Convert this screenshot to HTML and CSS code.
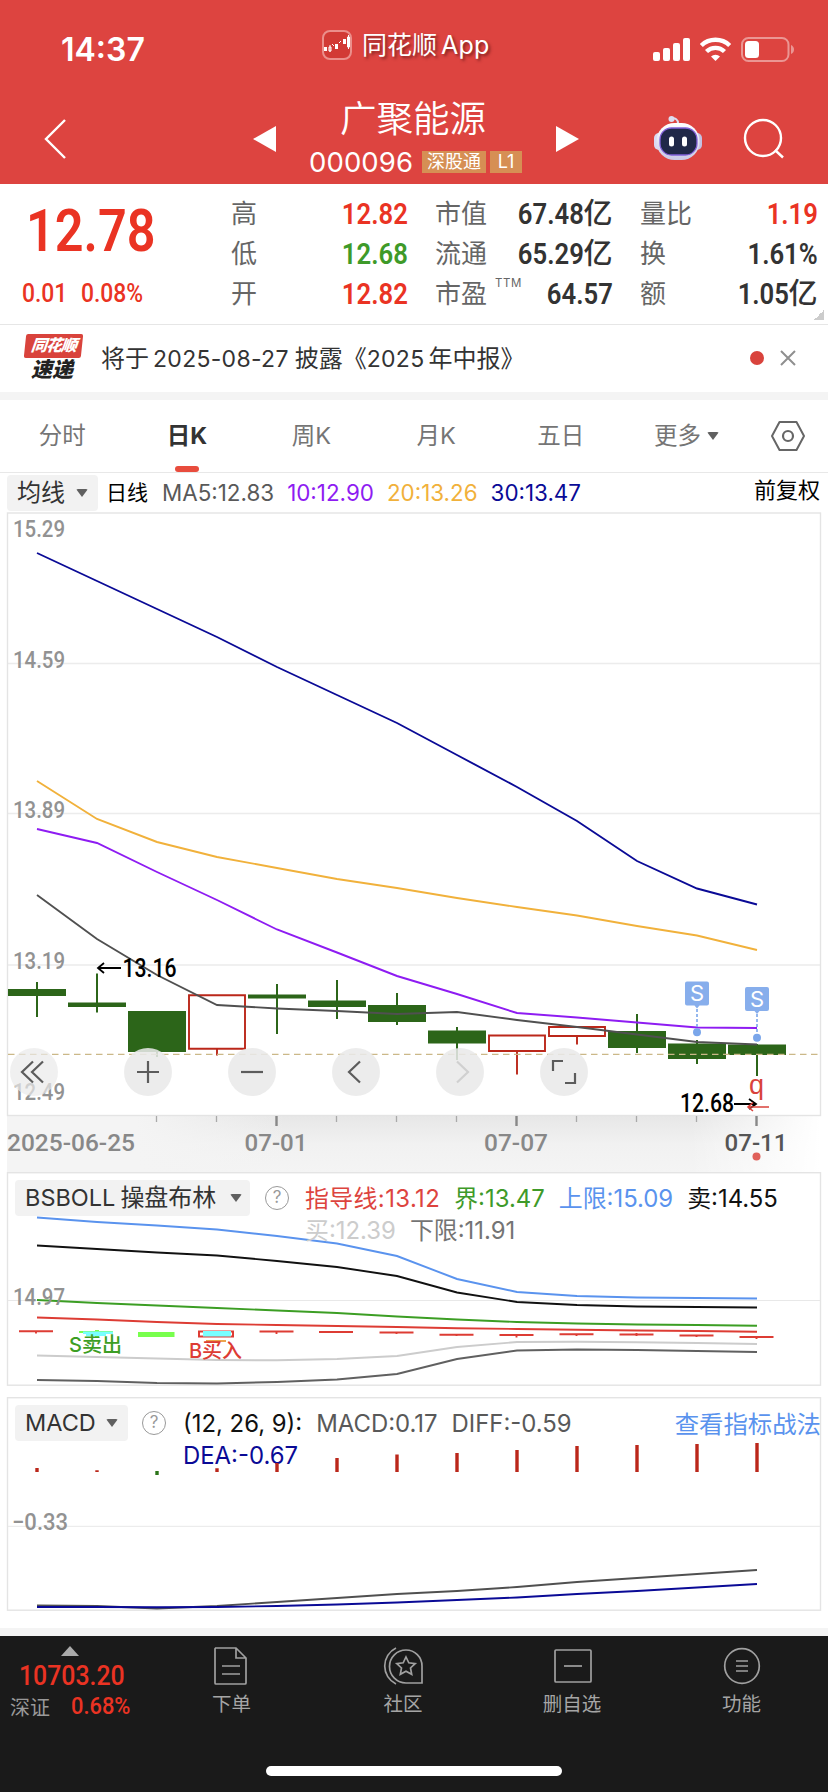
FILE: index.html
```html
<!DOCTYPE html>
<html lang="zh-CN">
<head>
<meta charset="utf-8">
<title>广聚能源 000096</title>
<link rel="stylesheet" href="styles.css">
</head>
<body>
<header class="header">
  <div class="status">
    <span class="time">14:37</span>
    <div class="app">
      <svg width="30" height="30" viewBox="0 0 30 30"><rect x="1" y="1" width="28" height="28" rx="7" fill="#d23a35" stroke="#eb8f8b" stroke-width="2"/><path d="M2 17h3v4H2zM10 13l3 3M13 14h3v5h-3zM16 12l2-2M21 9h3v5h-3z" fill="#fff"/><path d="M7 17h2v4H7zM8 15v7M10 14l2 2M17 13l2-2M25.500 7h2v10h-2zM26.500 5v14" fill="none" stroke="#fff" stroke-width="1"/></svg>
      <span class="app-name">同花顺<span class="app-latin">App</span></span>
    </div>
    <svg class="radios" width="143" height="28" viewBox="652 35 143 28">
      <g fill="#fff"><rect x="653" y="52" width="7" height="9" rx="2"/><rect x="663" y="48" width="7" height="13" rx="2"/><rect x="673" y="43" width="7" height="18" rx="2"/><rect x="683" y="38" width="7" height="23" rx="2"/><path d="M715.500 61l-4.500-4.500a6.500 6.500 0 0 1 9 0z"/></g>
      <path d="M701.300 45.500a20.500 20.500 0 0 1 28.400 0M706.500 51.500a13 13 0 0 1 18 0" fill="none" stroke="#fff" stroke-width="4.400"/>
      <rect x="742" y="38" width="46.500" height="23" rx="6.500" fill="none" stroke="#eb9693" stroke-width="2"/><path d="M791 45v9q3-1.500 3-4.500t-3-4.500z" fill="#eb9693"/><rect x="745" y="41" width="14" height="17" rx="3.500" fill="#fff"/>
    </svg>
  </div>
  <div class="nav">
    <svg class="back" width="24" height="42" viewBox="0 0 24 42"><path d="M22 2L3 21l19 19" fill="none" stroke="#fff" stroke-width="2.400"/></svg>
    <svg class="prev" width="23" height="26" viewBox="0 0 23 26"><path d="M23 0v26L0 13z" fill="#fff"/></svg>
    <div class="title">
      <h1>广聚能源</h1>
      <div class="code"><span class="digits">000096</span><span class="tag">深股通</span><span class="tag tag-small">L1</span></div>
    </div>
    <svg class="next" width="23" height="26" viewBox="0 0 23 26"><path d="M0 0v26l23-13z" fill="#fff"/></svg>
    <svg class="robot" width="50" height="46" viewBox="653 115 50 46">
      <defs><linearGradient id="shell" x2="0" y2="1"><stop offset="0" stop-color="#fff"/><stop offset="1" stop-color="#c9c9e6"/></linearGradient></defs>
      <path d="M671 118.500q7-1 7 5" fill="none" stroke="#dcdcf0" stroke-width="2"/><circle cx="671.500" cy="119" r="3" fill="#dcdcf0"/>
      <rect x="654" y="133" width="10" height="17" rx="5" fill="#dadaf2"/><rect x="692" y="133" width="10" height="17" rx="5" fill="#c4c2e2"/>
      <rect x="656.500" y="123" width="43" height="37" rx="18" fill="url(#shell)"/>
      <rect x="660" y="128" width="37" height="27" rx="11.500" fill="#202848" stroke="#8060d8" stroke-width="1.300"/>
      <rect x="669" y="136.500" width="5" height="10" rx="2.500" fill="#fff"/><rect x="682" y="136.500" width="5" height="10" rx="2.500" fill="#fff"/>
    </svg>
    <svg class="search" width="42" height="42" viewBox="743 118 42 42"><circle cx="763" cy="138" r="18" fill="none" stroke="#fff" stroke-width="2.400"/><path d="M775 150l8 7.500" stroke="#fff" stroke-width="2.400"/></svg>
  </div>
</header>

<section class="quote">
  <div class="price-box">
    <div class="price din">12.78</div>
    <div class="change"><span class="din">0.01</span><span class="din">0.08%</span></div>
  </div>
  <dl class="stats stats-a">
    <dt>高</dt><dd class="up"><span class="din">12.82</span></dd>
    <dt>低</dt><dd class="down"><span class="din">12.68</span></dd>
    <dt>开</dt><dd class="up"><span class="din">12.82</span></dd>
  </dl>
  <dl class="stats stats-b">
    <dt>市值</dt><dd><span class="din">67.48</span>亿</dd>
    <dt>流通</dt><dd><span class="din">65.29</span>亿</dd>
    <dt>市盈<sup>TTM</sup></dt><dd><span class="din">64.57</span></dd>
  </dl>
  <dl class="stats stats-c">
    <dt>量比</dt><dd class="up"><span class="din">1.19</span></dd>
    <dt>换</dt><dd><span class="din">1.61%</span></dd>
    <dt>额</dt><dd><span class="din">1.05</span>亿</dd>
  </dl>
  <i class="corner"></i>
</section>

<section class="news">
  <div class="logo"><span class="logo-top">同花顺</span><span class="logo-bottom">速递</span></div>
  <p>将于<span class="num first">2025-08-27</span>披露《<span class="num">2025</span>年中报》</p>
  <i class="dot"></i>
  <svg class="close" width="16" height="16" viewBox="0 0 16 16"><path d="M1 1l14 14M15 1L1 15" stroke="#8f8f8f" stroke-width="2"/></svg>
</section>

<nav class="tabs">
  <span>分时</span><span class="active">日<b>K</b></span><span>周<b>K</b></span><span>月<b>K</b></span><span>五日</span><span class="more">更多<i class="caret"></i></span>
  <svg width="36" height="32" viewBox="0 0 36 32"><path d="M9.500 2h17L34 16l-7.500 14h-17L2 16z" fill="none" stroke="#666" stroke-width="2" stroke-linejoin="round"/><circle cx="18" cy="16" r="5" fill="none" stroke="#666" stroke-width="2.200"/></svg>
</nav>

<div class="ma-row">
  <span class="pill">均线<i class="caret"></i></span><span class="kind">日线</span>
  <span class="ma c-dark">MA5:12.83</span><span class="ma c-purple">10:12.90</span><span class="ma c-orange">20:13.26</span><span class="ma c-navy">30:13.47</span>
  <span class="adjust">前复权</span>
</div>

<section class="kline">
  <svg class="plot" width="828" height="660" viewBox="0 512 828 660">
    <defs><linearGradient id="axis" x1="0" x2="0" y1="0" y2="1"><stop offset="0" stop-color="#e7e7e7"/><stop offset=".5" stop-color="#f1f1f1"/><stop offset="1" stop-color="#f4f4f4"/></linearGradient>
    <linearGradient id="fade-l"><stop offset="0" stop-color="#f4f4f4"/><stop offset="1" stop-color="#f4f4f4" stop-opacity="0"/></linearGradient>
    <linearGradient id="fade-r"><stop offset="0" stop-color="#fff" stop-opacity="0"/><stop offset="1" stop-color="#fff"/></linearGradient></defs>
    <rect x="7" y="1116" width="815" height="56" fill="url(#axis)"/><rect x="7" y="1116" width="130" height="56" fill="#f4f4f4"/><rect x="136" y="1116" width="150" height="56" fill="url(#fade-l)"/><rect x="690" y="1116" width="130" height="56" fill="url(#fade-r)"/><rect x="819" y="1116" width="9" height="56" fill="#fff"/>
    <path d="M8 663.500H820M8 813.500H820M8 965H820" stroke="#ececec" stroke-width="1.300"/>
    <rect x="7.500" y="513" width="813" height="602.500" fill="none" stroke="#e4e4e4" stroke-width="1.400"/>
    <g class="din-label">
      <text x="13" y="537" textLength="52" lengthAdjust="spacingAndGlyphs">15.29</text><text x="13" y="667.500" textLength="52" lengthAdjust="spacingAndGlyphs">14.59</text><text x="13" y="818" textLength="52" lengthAdjust="spacingAndGlyphs">13.89</text><text x="13" y="969" textLength="52" lengthAdjust="spacingAndGlyphs">13.19</text><text x="13" y="1099.500" textLength="52" lengthAdjust="spacingAndGlyphs">12.49</text>
    </g>
    <g fill="#2c6519">
      <path d="M8 989h58v7H8zM36 982h2v35h-2zM68 1002.500h58v4.500H68zM96 973.500h2v39h-2zM128 1011h58v41h-58zM156 1050h2v7h-2zM248 994.500h58v4h-58zM276 984h2v50h-2zM308 1000.500h58v6.500h-58zM336 980h2v39h-2zM368 1005h58v17h-58zM396 993h2v32h-2zM428 1030.500h58v13h-58zM456 1027h2v33h-2zM608 1031h58v17h-58zM636 1014h2v39h-2zM668 1043.500h58v15.500h-58zM696 1040h2v24h-2zM728 1044.500h58v10.500h-58zM756 1044h2v32h-2z"/>
    </g>
    <path d="M189 995.200h56v53.600h-56zM217 1049v6.500M489 1035.500h56v15.500h-56zM517 1051v23.500M549 1027h56v9h-56zM577 1036v8.500" fill="none" stroke="#bb271a" stroke-width="1.900"/>
    <path d="M8 1054.300H820" stroke="#cbb888" stroke-width="1.200" stroke-dasharray="6.500 4.500"/>
    <g fill="none" stroke-width="1.900">
      <polyline stroke="#0a0a96" points="37,553 97,581 157,609 217,637 277,667 337,695 397,723 457,755 517,787 577,821 637,861 697,888.500 757,904.500"/>
      <polyline stroke="#f1b13b" points="37,781 97,819 157,842 217,857 277,868 337,879 397,888 457,898 517,907 577,915.500 637,926 697,935.500 757,950"/>
      <polyline stroke="#8e1cf2" points="37,829 97,843 157,872 217,900 277,929.500 337,952.500 397,976 457,994 517,1013 577,1017.500 637,1022.500 697,1027.500 757,1028"/>
      <polyline stroke="#505050" points="37,895 97,939 157,975 217,1005 277,1008.500 337,1011 397,1014 457,1012 517,1020 577,1027 637,1034.500 697,1042 757,1044.500"/>
    </g>
    <g class="mark"><path d="M121 968H99M104 963l-6 5 6 5M734 1104h21M749 1099l7 5-7 5" fill="none" stroke="#000" stroke-width="1.800"/><text x="122.500" y="976.500" textLength="54" lengthAdjust="spacingAndGlyphs">13.16</text><text x="680" y="1112" textLength="54" lengthAdjust="spacingAndGlyphs">12.68</text></g>
    <text x="749" y="1093.500" class="q">q</text><path d="M769 1107h-20M753 1102.500l-5 4.500 5 4" fill="none" stroke="#d9433c" stroke-width="1.600"/>
    <g fill="#87aeec"><path d="M687 981.500h20a2 2 0 0 1 2 2v20a2 2 0 0 1-2 2h-7.500l-2.500 3-2.500-3H687a2 2 0 0 1-2-2v-20a2 2 0 0 1 2-2zM747 987h20a2 2 0 0 1 2 2v20a2 2 0 0 1-2 2h-7.500l-2.500 3-2.500-3H747a2 2 0 0 1-2-2v-20a2 2 0 0 1 2-2z"/></g>
    <path d="M697 1009v20M757 1014v21" stroke="#7aa6ea" stroke-width="1.600" stroke-dasharray="3 2"/><circle cx="697" cy="1032.300" r="4" fill="#7aa6ea"/><circle cx="757" cy="1037.800" r="4" fill="#7aa6ea"/>
    <g class="badge"><text x="697" y="1001">S</text><text x="757" y="1006.500">S</text></g>
    <path d="M156.500 1116v6M216.500 1116v6M336.500 1116v6M396.500 1116v6M576.500 1116v6M636.500 1116v6M696.500 1116v6M456.500 1116v6" stroke="#aaa" stroke-width="1.300"/><path d="M276.500 1116v10M516.500 1116v10M756.500 1116v10" stroke="#888" stroke-width="2.400"/>
    <g class="date"><text x="7" y="1150.500" textLength="128" lengthAdjust="spacingAndGlyphs">2025-06-25</text><text x="244.500" y="1150.500" textLength="63" lengthAdjust="spacingAndGlyphs">07-01</text><text x="484" y="1150.500" textLength="64" lengthAdjust="spacingAndGlyphs">07-07</text><text x="724.500" y="1150.500" textLength="63" lengthAdjust="spacingAndGlyphs" class="today">07-11</text></g>
    <circle cx="756.500" cy="1156.500" r="4" fill="#e0605a"/>
  </svg>
  <div class="tools">
    <button><svg viewBox="0 0 48 48"><path d="M23 13.500L12 24l11 10.500M33 13.500L22 24l11 10.500"/></svg></button>
    <button><svg viewBox="0 0 48 48"><path d="M24 13v22M13 24h22"/></svg></button>
    <button><svg viewBox="0 0 48 48"><path d="M13 24h22"/></svg></button>
    <button><svg viewBox="0 0 48 48"><path d="M28 13.500L17 24l11 10.500"/></svg></button>
    <button class="off"><svg viewBox="0 0 48 48"><path d="M21 13.500L32 24 21 34.500"/></svg></button>
    <button><svg viewBox="0 0 48 48"><path d="M23 13H13v10M25 35h10V25"/></svg></button>
  </div>
</section>

<section class="panel boll">
  <svg class="plot" width="828" height="214" viewBox="0 1172 828 214">
    <rect x="7.500" y="1172.700" width="813" height="212.500" fill="#fff" stroke="#e4e4e4" stroke-width="1.400"/><path d="M8 1300.500H820" stroke="#e8e8e8"/>
    <g fill="none" stroke-width="1.900">
      <polyline stroke="#5a93ee" points="37,1217.500 97,1222 157,1225.500 217,1229.500 277,1236 337,1243.500 397,1256 457,1279 517,1292 577,1296 637,1297.500 697,1298 757,1298.500"/>
      <polyline stroke="#111" points="37,1245.500 97,1249 157,1252.500 217,1255.500 277,1261 337,1267 397,1276 457,1292.500 517,1302 577,1305 637,1306.500 697,1307 757,1307.500"/>
      <polyline stroke="#3c9e24" points="37,1300 97,1303 157,1305.500 217,1308 277,1310.500 337,1313 397,1316.500 457,1319.500 517,1322 577,1323.500 637,1324.500 697,1325 757,1325.700"/>
      <polyline stroke="#dd3c34" points="37,1317.500 97,1319.500 157,1322 217,1324 277,1325 337,1326 397,1327 457,1328.200 517,1329 577,1329.800 637,1330.500 697,1331 757,1331.700"/>
      <polyline stroke="#ccc" points="37,1355.500 97,1357 157,1358.500 217,1360 277,1360.300 337,1359 397,1356 457,1347 517,1342 577,1341.800 637,1342.300 697,1343 757,1344"/>
      <polyline stroke="#606060" points="37,1380 97,1381 157,1383 217,1383.500 277,1382 337,1379.500 397,1374 457,1359 517,1350.500 577,1349.500 637,1350 697,1351 757,1352"/>
      <path stroke="#dd3c34" d="M19 1331.300h34M36 1331v2.500M259.500 1331.500h34M276.500 1331v3M319 1332h34M336 1331v2M379.500 1332.500h34M396.500 1332v2M439.500 1334.700h34M456.500 1334v2M499.500 1335h34M516.500 1335v2.500M559.500 1334.200h34M576.500 1334v2M619.500 1334.500h34M636.500 1333v3M679.500 1335.500h34M696.500 1335v2M739.500 1337h34M756.500 1337v2"/>
    </g>
    <path fill="#78ff4d" d="M79 1331h34v2H79zM95 1330h4v7h-4zM138 1332h36.500v5H138z"/><path fill="#79ffff" d="M83 1331.500h30v2.500H83zM86 1334h20v2H86z"/>
    <rect x="199" y="1331.500" width="34" height="5" fill="#fff" stroke="#dd3c34" stroke-width="2"/><path fill="#79ffff" d="M203 1331h28v5.500h-28z"/><path fill="#eca44e" d="M206 1340h20v2h-20z"/>
    <text class="din-label" x="13" y="1304.500" textLength="52" lengthAdjust="spacingAndGlyphs">14.97</text>
    <text class="signal" x="69" y="1351.500" fill="#3c9e24" textLength="53">S卖出</text><text class="signal" x="189" y="1357.500" fill="#dd3c34" textLength="53">B买入</text>
  </svg>
  <span class="pill"><span class="lat">BSBOLL</span>操盘布林<i class="caret"></i></span><span class="help">?</span>
  <div class="legend">
    <span class="c-red spread">指导线:13.12</span><span class="c-green">界:13.47</span><span class="c-blue">上限:15.09</span><span class="c-black">卖:14.55</span><br>
    <span class="c-light">买:12.39</span><span class="c-gray">下限:11.91</span>
  </div>
</section>

<section class="panel macd">
  <svg class="plot" width="828" height="214" viewBox="0 1397 828 214">
    <rect x="7.500" y="1397.700" width="813" height="212.500" fill="#fff" stroke="#e4e4e4" stroke-width="1.400"/><path d="M8 1526.300H820" stroke="#e8e8e8"/>
    <g fill="none" stroke-width="1.900"><polyline stroke="#505050" points="37,1605.500 97,1606 157,1608.500 217,1606 277,1602 337,1598 397,1594 457,1591 517,1587 577,1582 637,1578 697,1574 757,1570"/><polyline stroke="#0a0a96" points="37,1607 97,1607 157,1607.300 217,1607 277,1606 337,1604.500 397,1602.500 457,1600 517,1597.500 577,1594 637,1591 697,1587.500 757,1584"/></g>
    <text class="din-label" x="12" y="1529.500" textLength="56" lengthAdjust="spacingAndGlyphs">−0.33</text>
  </svg>
  <span class="pill"><span class="lat">MACD</span><i class="caret"></i></span><span class="help">?</span>
  <div class="legend">
    <span class="c-black">(12, 26, 9):</span><span class="c-dark">MACD:0.17</span><span class="c-dark">DIFF:-0.59</span><br>
    <span class="c-navy">DEA:-0.67</span>
  </div>
  <span class="link">查看指标战法</span>
  <svg class="plot" width="828" height="214" viewBox="0 1397 828 214"><path stroke="#bb271a" stroke-width="3.400" d="M37 1468v4M97 1470.300v1.700M217 1468.300v3.700M277 1463v9M337 1458v14M397 1454.500v17.500M457 1453v19M517 1450v22M577 1446v26M637 1445v27M697 1444v28M757 1443v29"/><path stroke="#2c7519" stroke-width="3.400" d="M157 1471v4"/></svg>
</section>

<footer class="footer">
  <div class="index">
    <i class="up-arrow"></i>
    <span class="index-value din">10703.20</span>
    <div class="index-row"><span>深证</span><span class="din">0.68%</span></div>
  </div>
  <div class="item"><svg viewBox="0 0 42 40"><path d="M4 2h21l10 10v25a1 1 0 0 1-1 1H5a1 1 0 0 1-1-1V3a1 1 0 0 1 1-1M25 2v10h10M11 20h18M11 28h18"/></svg>下单</div>
  <div class="item"><svg viewBox="0 0 42 40"><path d="M14 2A20 20 0 0 0 14 38"/><path d="M24 4a16 16 0 0 0 0 33h16V20a16 16 0 0 0-16-16z"/><path d="M24 11l2.800 5.800 6.400.8-4.700 4.400 1.200 6.300-5.700-3.100-5.700 3.100 1.200-6.300-4.700-4.400 6.400-.8z"/></svg>社区</div>
  <div class="item"><svg viewBox="0 0 42 40"><rect x="4" y="4" width="36" height="32" rx="1"/><path d="M13 20h18"/></svg>删自选</div>
  <div class="item"><svg viewBox="0 0 42 40"><circle cx="21" cy="20" r="17.300"/><path d="M15 15h12M15 20h12M15 25h12"/></svg>功能</div>
  <i class="home"></i>
</footer>
</body>
</html>
```
FILE: styles.css
```css
* { box-sizing: border-box; margin: 0; padding: 0; }
body { width: 828px; height: 1792px; overflow: hidden; background: #fff; color: #333; font-family: Inter, "Noto Sans CJK SC", sans-serif; font-size: 22px; }
i { display: block; font-style: normal; }
svg { display: block; flex: none; }
.din { display: inline-block; font-family: Roboto, sans-serif; transform: scaleX(.87); transform-origin: right; }

.header { height: 184px; background: #dd4440; color: #fff; }
.status { display: flex; height: 92px; padding-top: 30px; }
.time { width: 260px; padding-left: 61px; font-size: 32px; font-weight: 600; line-height: 40px; }
.app { display: flex; width: 269px; margin-left: 62px; gap: 10px; line-height: 31px; }
.app-name { font-size: 25px; text-shadow: 2px 2px 3px rgba(90, 20, 20, .7); white-space: nowrap; }
.app-latin { margin-left: 4px; letter-spacing: .2px; }
.radios { margin: 5px 0 0 61px; }
.nav { display: flex; height: 92px; align-items: flex-start; }
.back { margin: 26px 0 0 43px; }
.prev { margin: 34px 0 0 186px; }
.title { width: 213px; margin-left: 33px; }
h1 { padding-left: 31px; margin-top: 4px; font-size: 36.500px; font-weight: 350; line-height: 46px; white-space: nowrap; }
.code { display: flex; align-items: center; margin-top: 7px; height: 26px; }
.digits { width: 113px; font-size: 27.500px; letter-spacing: .1px; }
.tag { width: 64px; height: 22px; margin-right: 4px; background: #d68f54; text-align: center; font-size: 18px; line-height: 21px; flex: none; }
.tag-small { width: 32px; margin-right: 0; }
.next { margin: 34px 0 0 34px; }
.robot { margin: 23px 0 0 74px; }
.search { margin: 26px 0 0 40px; }

.quote { position: relative; display: flex; height: 141px; border-bottom: 1px solid #e6e6e6; }
.price-box { width: 231px; color: #ea3323; font-weight: 500; }
.price { display: block; width: 180px; margin: 15px 0 0 26px; font-size: 60px; font-weight: 600; line-height: 64px; transform-origin: left; transform: scaleX(.84); }
.change { display: flex; padding: 15px 0 0 22px; font-size: 26px; line-height: 30px; }
.change .din { width: 58.500px; transform-origin: left; transform: scaleX(.88); }
.stats { display: grid; grid-template-columns: auto 1fr; grid-auto-rows: 40px; padding-top: 10px; line-height: 40px; }
.stats-a { width: 176.500px; }
.stats-b { width: 177.500px; margin-left: 27.500px; }
.stats-c { width: 177.500px; margin-left: 27.500px; }
dt { color: #666; font-size: 26px; white-space: nowrap; }
dt sup { position: absolute; margin: -11px 0 0 8px; font-size: 11.500px; letter-spacing: .6px; }
dd { font-size: 29px; font-weight: 500; text-align: right; white-space: nowrap; }
dd .din { font-size: 29.500px; line-height: 36px; font-weight: 600; }
.up { color: #ea3323; }
.down { color: #3e9a29; }
.corner { position: absolute; right: 4px; bottom: 4px; width: 10px; height: 10px; background: linear-gradient(135deg, transparent 50%, #ccc 50%); }

.news { display: flex; align-items: flex-start; height: 75px; border-bottom: 8px solid #f4f4f4; }
.logo { width: 77px; padding: 9px 0 0 25px; font-style: italic; font-weight: 900; white-space: nowrap; }
.logo-top { display: block; width: 57px; height: 24px; border-radius: 2px; background: #d9433c; color: #fff; font-size: 16px; line-height: 23px; text-align: center; letter-spacing: -1px; transform: skewX(-6deg); }
.logo-bottom { display: block; padding-left: 6px; color: #222; font-size: 21px; line-height: 24px; }
.news p { width: 649px; margin-left: 24px; font-size: 24px; line-height: 68px; white-space: nowrap; }
.num { margin-right: 4px; font-size: 23px; letter-spacing: .3px; }
.first { margin: 0 6px 0 4px; }
.dot { width: 14px; height: 14px; margin-top: 26px; border-radius: 7px; background: #d9433c; }
.close { margin: 25px 0 0 16px; }

.tabs { display: flex; height: 73px; border-bottom: 1px solid #e8e8e8; color: #757575; font-size: 23.500px; line-height: 71px; }
.tabs span { position: relative; width: 124.600px; text-align: center; white-space: nowrap; }
.tabs b { font-weight: inherit; }
.tabs .active { color: #333; font-weight: 700; }
.tabs .active::after { content: ""; position: absolute; left: 50px; bottom: 0; width: 24px; height: 6px; border-radius: 3px; background: #e84c3d; }
.caret { display: inline-block; border: 6px solid transparent; border-top: 8px solid #606060; border-bottom: 0; border-radius: 2px; vertical-align: middle; }
.tabs .more { width: 147px; padding-right: 20px; }
.more .caret { margin: -4px 0 0 6px; }
.tabs svg { margin: 20px 0 0 0; }

.ma-row { display: flex; height: 39px; padding: 2px 8px 0 7px; color: #333; font-size: 22.400px; line-height: 35px; white-space: nowrap; }
.pill { display: inline-flex; align-items: center; flex: none; width: 91px; height: 36px; padding: 0 10px; border-radius: 4px; background: #f2f2f2; color: #333; font-size: 24px; line-height: 36px; }
.pill .caret { margin-left: auto; }
.kind { width: 56px; margin-left: 8px; color: #000; font-size: 21px; }
.ma { margin-right: 13px; }
.c-dark { color: #595959; }
.c-purple { color: #8e1cf2; }
.c-orange { color: #f1b13b; }
.c-navy { color: #0a0a96; }
.adjust { margin: -2px 0 0 auto; color: #000; font-size: 22px; }

.kline { position: relative; height: 660px; }
.plot { position: absolute; left: 0; top: 0; }
.din-label { fill: #929292; font: 500 24px Roboto, sans-serif; }
.date { fill: #888; font: 500 23.500px Roboto, sans-serif; }
.today { fill: #555; }
.mark { font: 500 25px Roboto, sans-serif; }
.q { fill: #d9433c; font: 27px "Liberation Sans", sans-serif; }
.badge { fill: #fff; font: 22px Inter, sans-serif; text-anchor: middle; }
.signal { font: 500 20px Inter, "Noto Sans CJK SC", sans-serif; }
.tools { position: absolute; left: 10px; top: 536px; display: flex; }
.tools button { width: 48px; height: 48px; margin-right: 56px; border: 0; border-radius: 50%; background: rgba(233, 233, 233, .87); }
.tools button:first-child { margin-right: 66px; background: rgba(233, 233, 233, .7); }
.tools path { fill: none; stroke: #5c5c5c; stroke-width: 2.200; }
.tools .off path { stroke: #d0d0d0; }

.panel { position: relative; display: flex; height: 214px; padding: 8px 0 0 15px; }
.boll { margin-bottom: 11px; }
.panel > :not(:first-child) { position: relative; }
.panel > .plot:last-child { position: absolute; }
.panel .pill { width: 235px; padding-left: 10px; padding-right: 8px; }
.macd .pill { width: 113px; padding-right: 10px; }
.lat { margin-right: 5px; font-size: 23.500px; }
.help { flex: none; width: 24px; height: 24px; margin: 6px 16px 0 15px; border: 1.600px solid #999; border-radius: 50%; color: #999; text-align: center; font-size: 17px; line-height: 21px; }
.macd .help { margin-left: 14px; margin-right: 17px; }
.legend { font-size: 23.900px; line-height: 32px; margin-top: 3px; white-space: nowrap; }
.legend span { margin-right: 14px; }
.legend .spread { letter-spacing: .4px; }
.c-red { color: #dd443e; }
.c-green { color: #3e9a29; }
.c-blue { color: #5a93ee; }
.c-black { color: #111; }
.c-light { color: #ccc; }
.c-gray { color: #747474; }
.link { margin: 3px 7px 0 auto; color: #5a93ee; font-size: 24.400px; line-height: 32px; white-space: nowrap; }

.footer { position: relative; display: grid; grid-template-columns: 146px 171px 172px 166px 173px; height: 164px; margin-top: 17px; border-top: 8px solid #f4f4f4; background: #1a1a1a; color: #a5a5a5; }
.index { color: #ea3323; white-space: nowrap; }
.up-arrow { width: 0; margin: 10px 0 0 61px; border: 9px solid transparent; border-bottom: 10px solid #aaa; border-top: 0; }
.index-value { display: block; margin: 3px 0 0 19px; font-size: 27px; font-weight: 500; line-height: 34px; transform-origin: left; transform: scaleX(.92); }
.index-row { display: flex; gap: 21px; padding-left: 10px; font-size: 20px; line-height: 30px; }
.index-row span:first-child { color: #999; }
.index-row .din { font-size: 24px; font-weight: 500; line-height: 27px; transform-origin: left; transform: scaleX(.91); }
.item { display: flex; flex-direction: column; align-items: center; padding-top: 10px; font-size: 19.500px; line-height: 36px; }
.item svg { width: 42px; height: 40px; fill: none; stroke: #a0a0a0; stroke-width: 1.700; }
.home { position: absolute; left: 266px; top: 130px; width: 296px; height: 10px; border-radius: 5px; background: #fff; }
```
